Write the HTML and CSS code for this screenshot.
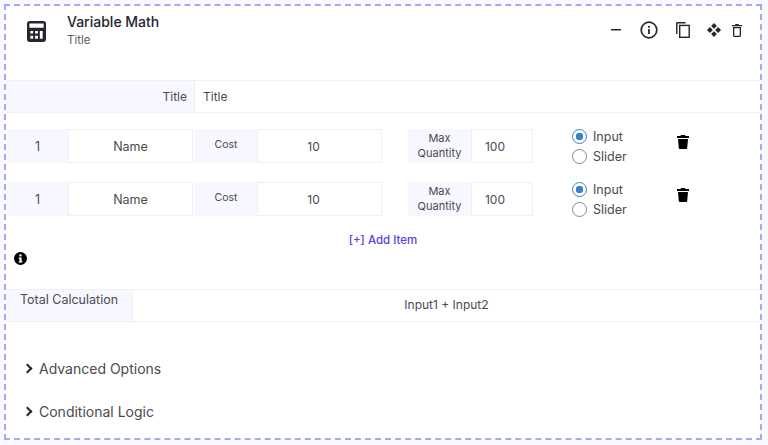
FILE: index.html
```html
<!DOCTYPE html>
<html lang="en">
<head>
	<meta charset="utf-8"/>
	<title>Variable Math</title>
	<link rel="stylesheet" href="styles.css">
</head>
<body>
<main class="block">
	<header class="block_head">
		<svg class="calc_icon" viewBox="0 0 20 22" width="19" height="21">
			<path fill="#23262f" fill-rule="evenodd" d="M3 0h14a3 3 0 0 1 3 3v16a3 3 0 0 1-3 3H3a3 3 0 0 1-3-3V3a3 3 0 0 1 3-3zM2.500 2.500v4.500h15V2.500zM3.500 10.500v2.500h3v-2.500zM8.500 10.500v2.500h3v-2.500zM13.500 10.500v8h3v-8zM3.500 15.500v3h3v-3zM8.500 15.500v3h3v-3z"/>
		</svg>
		<div class="head_text">
			<h1>Variable Math</h1>
			<p>Title</p>
		</div>
		<div class="tools">
			<svg class="minus" viewBox="0 0 10 2" width="10" height="2"><rect width="10" height="1.500" fill="#23262f"/></svg>
			<svg class="info" viewBox="0 0 18 18" width="18" height="18">
				<circle cx="9" cy="9" r="7.800" fill="none" stroke="#23262f" stroke-width="1.700"/>
				<rect x="8.100" y="8" width="1.800" height="5" fill="#23262f"/>
				<rect x="8.100" y="5" width="1.800" height="1.800" fill="#23262f"/>
			</svg>
			<svg class="copy" viewBox="0 0 14 16" width="14" height="16">
				<path fill="none" stroke="#23262f" stroke-width="1.400" d="M.8 12V1A.4.4 0 0 1 1.200.7H9.500"/>
				<rect x="3.700" y="3.400" width="9.500" height="11.900" fill="none" stroke="#23262f" stroke-width="1.400"/>
			</svg>
			<svg class="move" viewBox="0 0 14 14" width="14" height="14">
				<path fill="#23262f" d="M7 0l2.900 2.900L7 5.800 4.100 2.900zM7 8.200l2.900 2.900L7 14l-2.900-2.900zM2.900 4.100L5.800 7 2.900 9.900 0 7zM11.100 4.100L14 7l-2.900 2.900L8.200 7z"/>
			</svg>
			<svg class="bin" viewBox="0 0 10 13" width="10" height="13">
				<path fill="#23262f" fill-rule="evenodd" d="M3.500 0h3l.5 1h3v1.300H0V1h3zM1 3h8v8.500A1.500 1.500 0 0 1 7.500 13h-5A1.500 1.500 0 0 1 1 11.500zM2.300 4.200v7.500h5.400V4.200z"/>
			</svg>
		</div>
	</header>

	<div class="title_row">
		<div class="title_label">Title</div>
		<div class="title_value">Title</div>
	</div>

	<div class="item_row">
		<div class="cell tint num">1</div>
		<div class="cell field name">Name</div>
		<div class="cell tint cost"><span>Cost</span></div>
		<div class="cell field value">10</div>
		<div class="cell tint max">Max<br>Quantity</div>
		<div class="cell field qty">100</div>
		<div class="radios">
			<label class="radio on">Input</label>
			<label class="radio">Slider</label>
		</div>
		<svg class="item_bin" viewBox="0 0 12 14" width="12" height="14">
			<path fill="#000" d="M4 0h4l.5 1H12v2H0V1h3.500zM1 4h10l-.8 9a1 1 0 0 1-1 1H2.800a1 1 0 0 1-1-1z"/>
		</svg>
	</div>
	<div class="item_row">
		<div class="cell tint num">1</div>
		<div class="cell field name">Name</div>
		<div class="cell tint cost"><span>Cost</span></div>
		<div class="cell field value">10</div>
		<div class="cell tint max">Max<br>Quantity</div>
		<div class="cell field qty">100</div>
		<div class="radios">
			<label class="radio on">Input</label>
			<label class="radio">Slider</label>
		</div>
		<svg class="item_bin" viewBox="0 0 12 14" width="12" height="14">
			<path fill="#000" d="M4 0h4l.5 1H12v2H0V1h3.500zM1 4h10l-.8 9a1 1 0 0 1-1 1H2.800a1 1 0 0 1-1-1z"/>
		</svg>
	</div>

	<div class="add_item">[+] Add Item</div>

	<svg class="note_icon" viewBox="0 0 13 13" width="13" height="13">
		<circle cx="6.500" cy="6.500" r="6.500" fill="#000"/>
		<rect x="5.300" y="2.400" width="2.300" height="2" fill="#fff"/>
		<path fill="#fff" d="M4.700 5.500h2.900v3.700h.8v1.200H4.700V9.200h.8V6.700h-.8z"/>
	</svg>

	<div class="total_row">
		<div class="total_label">Total Calculation</div>
		<div class="total_value">Input1 + Input2</div>
	</div>

	<div class="option first"><span class="chevron"></span>Advanced Options</div>
	<div class="option"><span class="chevron"></span>Conditional Logic</div>
</main>
</body>
</html>
```

FILE: styles.css
```css
* {
	box-sizing: border-box;
}
body {
	margin: 0;
	height: 445px;
	overflow: hidden;
	padding: 4px 6px 5px 4px;
	background: #f8f9ff;
	font-family: "Inter", "Liberation Sans", sans-serif;
	color: #4a4a4f;
}
.block {
	height: 436px;
	background: #fff;
	border: 2px dashed #a5a9f5;
}
.block_head {
	display: flex;
	height: 74px;
	padding: 8px 0 0 21px;
}
.calc_icon {
	margin-top: 7px;
}
.head_text {
	margin-left: 21px;
}
.head_text h1 {
	margin: 0;
	font-size: 14px;
	line-height: 16px;
	font-weight: 500;
	color: #23262f;
}
.head_text p {
	margin: 2px 0 0;
	font-size: 11.500px;
	line-height: 16px;
	color: #5c5e66;
}
.tools {
	display: flex;
	align-items: center;
	height: 24px;
	margin: 4px 0 0 auto;
	padding-right: 18px;
}
.minus {
	margin-right: 19px;
}
.info {
	margin-right: 18px;
}
.copy {
	margin-right: 17px;
}
.move {
	margin-right: 11px;
}
.title_row,
.total_row {
	display: flex;
	height: 33px;
	border-top: 1px solid #f0f0f3;
	border-bottom: 1px solid #f0f0f3;
}
.title_label {
	width: 188px;
	padding-right: 7px;
	background: #f7f8ff;
	text-align: right;
	font-size: 12px;
	line-height: 31px;
}
.title_value {
	flex: 1;
	padding-left: 8px;
	border-left: 1px solid #f0f0f3;
	font-size: 12px;
	line-height: 31px;
}
.item_row {
	display: flex;
	align-items: flex-start;
	height: 34px;
	margin: 16px 0 19px 1px;
}
.item_row + .item_row {
	margin-bottom: 0;
}
.cell {
	height: 34px;
	display: flex;
	align-items: center;
	justify-content: center;
	text-align: center;
	font-size: 12.500px;
}
.tint {
	background: #f7f8ff;
}
.field {
	border: 1px solid #f0f0f3;
}
.num {
	width: 61px;
}
.name {
	width: 125px;
}
.cost {
	width: 62px;
	margin-left: 2px;
	font-size: 10.500px;
}
.cost span {
	margin-bottom: 3px;
}
.value {
	width: 125px;
	padding-right: 12px;
	font-size: 12px;
}
.max {
	width: 63px;
	margin-left: 26px;
	font-size: 11px;
	line-height: 15px;
}
.qty {
	width: 62px;
	padding-right: 14px;
	font-size: 12px;
}
.radios {
	width: 105px;
	margin-left: 39px;
}
.radio {
	display: flex;
	align-items: center;
	height: 20px;
	font-size: 12.500px;
	margin-top: -3px;
}
.radio + .radio {
	margin-top: 0;
}
.radio::before {
	content: "";
	width: 13px;
	height: 13px;
	margin-right: 6px;
	border: 1px solid #8a8a8a;
	border-radius: 50%;
	background: #fff;
}
.radio.on::before {
	border-color: #3b82c4;
	background: radial-gradient(circle, #3b82c4 0 3.500px, #fff 4px);
}
.item_bin {
	margin-top: 6px;
}
.add_item {
	margin-top: 16px;
	text-align: center;
	font-size: 11.500px;
	line-height: 16px;
	font-weight: 500;
	color: #4f46e5;
}
.note_icon {
	display: block;
	margin: 4px 0 0 8px;
}
.total_row {
	margin-top: 24px;
}
.total_label {
	width: 126px;
	padding: 2px 0 0 14px;
	background: #f7f8ff;
	font-size: 12.500px;
	line-height: 16px;
}
.total_value {
	flex: 1;
	border-left: 1px solid #f0f0f3;
	text-align: center;
	font-size: 12px;
	line-height: 29px;
}
.option {
	display: flex;
	align-items: center;
	height: 20px;
	margin-top: 23px;
	font-size: 14px;
}
.option.first {
	margin-top: 36px;
}
.chevron {
	width: 7px;
	height: 7px;
	margin: 1px 8px 0 18px;
	border-top: 2px solid #23262f;
	border-right: 2px solid #23262f;
	transform: rotate(45deg);
}
```
